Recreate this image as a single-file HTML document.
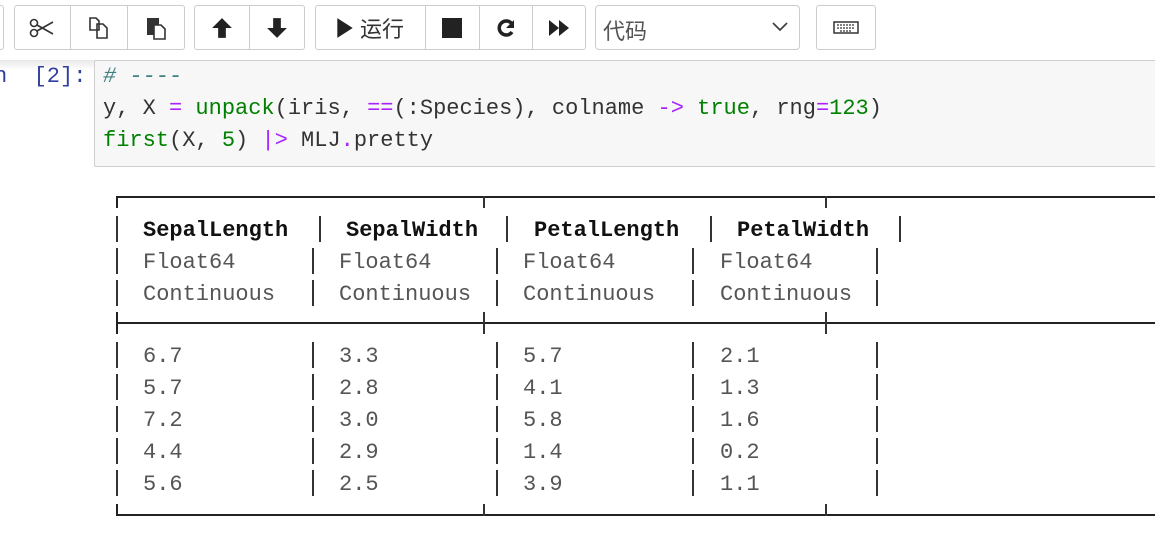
<!DOCTYPE html>
<html><head><meta charset="utf-8"><style>
body{margin:0;width:1155px;height:549px;overflow:hidden;background:#fff;position:relative;font-family:"Liberation Sans","Noto Sans CJK SC",sans-serif}
.a{position:absolute}
.grp{position:absolute;top:5px;height:45px;border:1px solid #ccc;border-radius:3px;background:#fff;box-sizing:border-box}
.dv{position:absolute;top:5px;width:1px;height:45px;background:#ccc}
.ic{position:absolute;top:5px;height:45px;display:flex;align-items:center;justify-content:center;color:#333}
.mono{font-family:"Liberation Mono","Noto Sans CJK SC",monospace;font-size:22px;white-space:pre;line-height:32px}
.t{position:absolute;font-family:"Liberation Mono",monospace;font-size:22px;line-height:32px;white-space:pre;color:#555}
.h{color:#111;font-weight:bold}
.p{position:absolute;width:2px;height:26px;background:repeating-linear-gradient(#333 0 26px,transparent 26px 32px)}
.hl{position:absolute;height:2px;background:#222;left:116px;width:1039px}
</style></head><body>
<div class="a" style="left:0;top:0;width:1155px;height:60px;background:#fff;box-shadow:0 2px 6px rgba(0,0,0,.12)"></div>
<div class="grp" style="left:-10px;width:14px"></div>
<div class="grp" style="left:14px;width:171px"></div>
<div class="dv" style="left:70px"></div><div class="dv" style="left:127px"></div>
<div class="ic" style="left:14px;width:56px"><svg width="26" height="20" viewBox="0 0 26 20"><circle cx="5" cy="5" r="3.5" fill="none" stroke="#333" stroke-width="1.6"/><circle cx="5" cy="15" r="3.5" fill="none" stroke="#333" stroke-width="1.6"/><path d="M8 7L24 16M8 13L24 4" stroke="#333" stroke-width="1.6"/></svg></div>
<div class="ic" style="left:70px;width:57px"><svg width="22" height="24" viewBox="0 0 22 24"><path d="M2 2h6l3 3v9H2z M9 8h6l4 4v10H9z" fill="#fff" stroke="#333" stroke-width="1.6"/></svg></div>
<div class="ic" style="left:127px;width:57px"><svg width="22" height="26" viewBox="0 0 22 26"><path d="M2 3h12v17H2z" fill="#333"/><path d="M9 10h7l4 4v10H9z" fill="#fff" stroke="#333" stroke-width="1.6"/></svg></div>
<div class="grp" style="left:194px;width:111px"></div>
<div class="dv" style="left:249px"></div>
<div class="ic" style="left:194px;width:55px"><svg width="22" height="22" viewBox="0 0 20 20"><path d="M10 1L1 10h5.5v9h7v-9H19z" fill="#222"/></svg></div>
<div class="ic" style="left:249px;width:55px"><svg width="22" height="22" viewBox="0 0 20 20"><path d="M10 19L1 10h5.5V1h7v9H19z" fill="#222"/></svg></div>
<div class="grp" style="left:315px;width:271px"></div>
<div class="dv" style="left:425px"></div><div class="dv" style="left:479px"></div><div class="dv" style="left:532px"></div>
<div class="ic" style="left:315px;width:110px;font-size:22px;color:#333"><svg width="18" height="22" viewBox="0 0 16 20" style="margin-right:6px"><path d="M1 1L15 10 1 19z" fill="#222"/></svg>运行</div>
<div class="ic" style="left:425px;width:54px"><div style="width:20px;height:20px;background:#222"></div></div>
<div class="ic" style="left:479px;width:53px"><svg width="20" height="20" viewBox="0 0 20 20"><path d="M16 6A7 7 0 1 0 16 14" fill="none" stroke="#222" stroke-width="3.5"/><path d="M18 2v8h-8z" fill="#222"/></svg></div>
<div class="ic" style="left:532px;width:54px"><svg width="22" height="20" viewBox="0 0 22 18"><path d="M1 1l10 8-10 8z M11 1l10 8-10 8z" fill="#222"/></svg></div>
<div class="grp" style="left:595px;width:205px;border-radius:4px"></div>
<div class="a" style="left:603px;top:14px;font-size:22px;color:#555">代码</div>
<svg class="a" style="left:772px;top:22px" width="16" height="10" viewBox="0 0 16 10"><path d="M1 1l7 7 7-7" fill="none" stroke="#444" stroke-width="1.8"/></svg>
<div class="grp" style="left:816px;width:60px"></div>
<svg class="a" style="left:833px;top:21px" width="26" height="13" viewBox="0 0 26 13"><rect x="1" y="1" width="24" height="11" fill="none" stroke="#333" stroke-width="1.5"/><path d="M4 4h18M4 7h18M7 10h12" stroke="#333" stroke-width="1.3" stroke-dasharray="2 1"/></svg>
<div class="a" style="left:0;top:60px;width:1155px;height:10px;background:linear-gradient(#e8e8e8,#fff)"></div>
<div class="a mono" style="left:-6px;top:61px;color:#303f9f;font-family:'Liberation Mono',monospace">n  [2]:</div>
<div class="a" style="left:94px;top:60px;width:1070px;height:107px;background:#f7f7f7;border:1px solid #cfcfcf;border-radius:2px;box-sizing:border-box"></div>
<div class="a mono" style="left:103px;top:61px;color:#333"><span style="color:#408080;font-style:italic"># ----</span>
y, X <span style="color:#aa22ff">=</span> <span style="color:#008000">unpack</span>(iris, <span style="color:#aa22ff">==</span>(:Species), colname <span style="color:#aa22ff">-&gt;</span> <span style="color:#008000">true</span>, rng<span style="color:#aa22ff">=</span><span style="color:#008000">123</span>)
<span style="color:#008000">first</span>(X, <span style="color:#008000">5</span>) <span style="color:#aa22ff">|&gt;</span> MLJ<span style="color:#aa22ff">.</span>pretty</div>
<div class="hl" style="top:196px"></div>
<div class="hl" style="top:322px"></div>
<div class="hl" style="top:514px"></div>
<div class="a" style="left:116px;top:196px;width:2px;height:12px;background:#222"></div>
<div class="a" style="left:116px;top:504px;width:2px;height:12px;background:#222"></div>
<div class="a" style="left:116px;top:312px;width:2px;height:22px;background:#222"></div>
<div class="p" style="left:116px;top:216px;height:90px"></div>
<div class="p" style="left:116px;top:342px;height:154px"></div>
<div class="a" style="left:483px;top:196px;width:2px;height:12px;background:#333"></div>
<div class="a" style="left:825px;top:196px;width:2px;height:12px;background:#333"></div>
<div class="a" style="left:483px;top:312px;width:2px;height:22px;background:#333"></div>
<div class="a" style="left:825px;top:312px;width:2px;height:22px;background:#333"></div>
<div class="a" style="left:483px;top:504px;width:2px;height:12px;background:#333"></div>
<div class="a" style="left:825px;top:504px;width:2px;height:12px;background:#333"></div>
<div class="p" style="left:319px;top:216px"></div><div class="p" style="left:506px;top:216px"></div><div class="p" style="left:710px;top:216px"></div><div class="p" style="left:899px;top:216px"></div>
<div class="t h" style="left:143px;top:215px">SepalLength</div>
<div class="t h" style="left:346px;top:215px">SepalWidth</div>
<div class="t h" style="left:534px;top:215px">PetalLength</div>
<div class="t h" style="left:737px;top:215px">PetalWidth</div>
<div class="p" style="left:312px;top:248px;height:58px"></div><div class="p" style="left:496px;top:248px;height:58px"></div><div class="p" style="left:692px;top:248px;height:58px"></div><div class="p" style="left:876px;top:248px;height:58px"></div>
<div class="t" style="left:143px;top:247px">Float64
Continuous</div>
<div class="t" style="left:339px;top:247px">Float64
Continuous</div>
<div class="t" style="left:523px;top:247px">Float64
Continuous</div>
<div class="t" style="left:720px;top:247px">Float64
Continuous</div>
<div class="p" style="left:312px;top:342px;height:154px"></div><div class="p" style="left:496px;top:342px;height:154px"></div><div class="p" style="left:692px;top:342px;height:154px"></div><div class="p" style="left:876px;top:342px;height:154px"></div>
<div class="t" style="left:143px;top:341px">6.7
5.7
7.2
4.4
5.6</div>
<div class="t" style="left:339px;top:341px">3.3
2.8
3.0
2.9
2.5</div>
<div class="t" style="left:523px;top:341px">5.7
4.1
5.8
1.4
3.9</div>
<div class="t" style="left:720px;top:341px">2.1
1.3
1.6
0.2
1.1</div>
</body></html>
